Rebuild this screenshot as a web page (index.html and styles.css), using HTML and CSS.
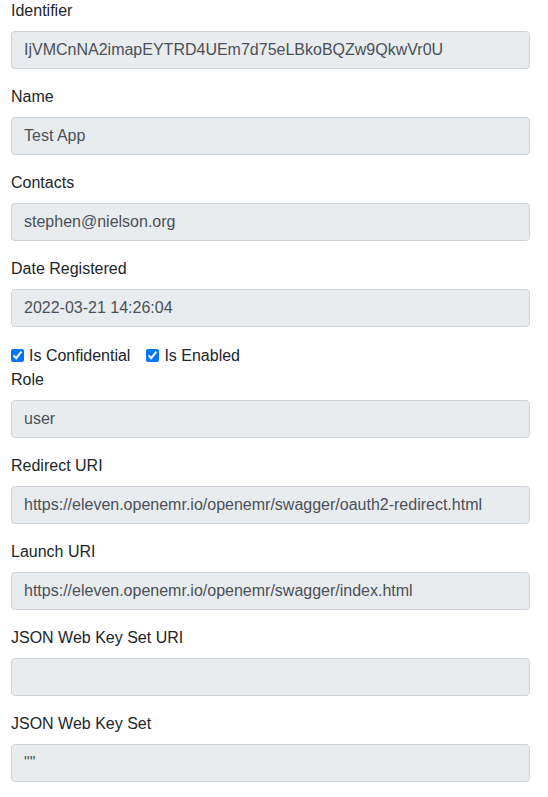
FILE: index.html
```html
<!DOCTYPE html>
<html lang="en">
<head>
  <meta charset="UTF-8">
  <meta name="viewport" content="width=device-width, initial-scale=1">
  <title>Client</title>
<link rel="stylesheet" href="styles.css">
</head>
<body>
  <form class="client">
    <div class="group">
      <label for="identifier">Identifier</label>
      <input type="text" id="identifier" class="field" value="IjVMCnNA2imapEYTRD4UEm7d75eLBkoBQZw9QkwVr0U" readonly>
    </div>
    <div class="group">
      <label for="name">Name</label>
      <input type="text" id="name" class="field" value="Test App" readonly>
    </div>
    <div class="group">
      <label for="contacts">Contacts</label>
      <input type="text" id="contacts" class="field" value="stephen@nielson.org" readonly>
    </div>
    <div class="group">
      <label for="registered">Date Registered</label>
      <input type="text" id="registered" class="field" value="2022-03-21 14:26:04" readonly>
    </div>
    <div class="checks">
      <label class="check"><input type="checkbox" checked> Is Confidential</label>
      <label class="check"><input type="checkbox" checked> Is Enabled</label>
    </div>
    <div class="group">
      <label for="role">Role</label>
      <input type="text" id="role" class="field" value="user" readonly>
    </div>
    <div class="group">
      <label for="redirect">Redirect URI</label>
      <input type="text" id="redirect" class="field" value="https://eleven.openemr.io/openemr/swagger/oauth2-redirect.html" readonly>
    </div>
    <div class="group">
      <label for="launch">Launch URI</label>
      <input type="text" id="launch" class="field" value="https://eleven.openemr.io/openemr/swagger/index.html" readonly>
    </div>
    <div class="group">
      <label for="jwksuri">JSON Web Key Set URI</label>
      <input type="text" id="jwksuri" class="field" value="" readonly>
    </div>
    <div class="group">
      <label for="jwks">JSON Web Key Set</label>
      <textarea id="jwks" class="field area" rows="1" readonly>""</textarea>
    </div>
  </form>
</body>
</html>
```

FILE: styles.css
```css
html, body {
  margin: 0;
  background: #fff;
}
body {
  font-family: "Liberation Sans", Arial, sans-serif;
  font-size: 16px;
  line-height: 1.5;
  color: #212529;
}
.client {
  width: 519px;
  padding-left: 11px;
  margin-top: -1px;
}
.group {
  margin-bottom: 16px;
}
.group label {
  display: block;
  margin-bottom: 8px;
}
.field {
  display: block;
  box-sizing: border-box;
  width: 100%;
  height: 38px;
  margin: 0;
  padding: 6px 12px;
  font-family: "Liberation Sans", Arial, sans-serif;
  font-size: 16px;
  line-height: 1.5;
  color: #495057;
  background: #e9ecef;
  border: 1px solid #ced4da;
  border-radius: 4px;
}
.field:focus {
  outline: none;
}
.area {
  resize: none;
  overflow: hidden;
}
.checks {
  display: flex;
  height: 25px;
  align-items: center;
}
.check {
  display: inline-flex;
  align-items: center;
  margin-right: 16px;
}
.check input {
  width: 13px;
  height: 13px;
  margin: 0 5px 0 0;
}
```
